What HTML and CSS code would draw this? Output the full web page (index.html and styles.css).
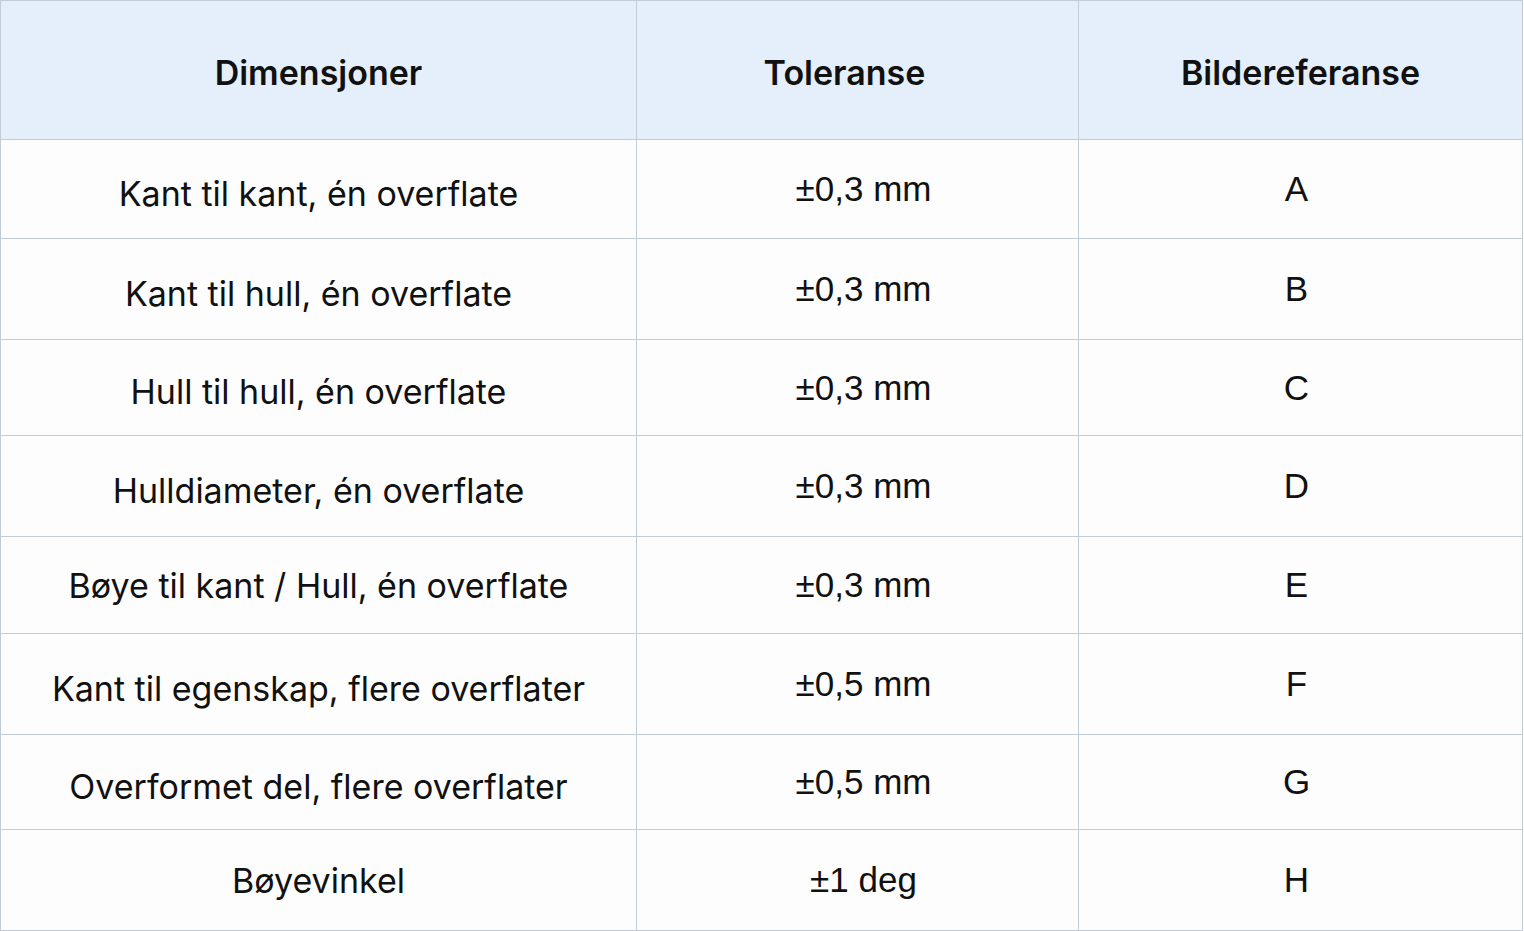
FILE: index.html
```html
<!DOCTYPE html>
<html lang="no">
<head>
<meta charset="utf-8">
<title>Toleranser</title>
<link rel="stylesheet" href="styles.css">
</head>
<body>
<div class="table">
  <div class="cell head">Dimensjoner</div>
  <div class="cell head head-tol">Toleranse</div>
  <div class="cell head">Bildereferanse</div>

  <div class="cell dim">Kant til kant, én overflate</div>
  <div class="cell tol">±0,3 mm</div>
  <div class="cell ref">A</div>

  <div class="cell dim">Kant til hull, én overflate</div>
  <div class="cell tol">±0,3 mm</div>
  <div class="cell ref">B</div>

  <div class="cell dim">Hull til hull, én overflate</div>
  <div class="cell tol">±0,3 mm</div>
  <div class="cell ref">C</div>

  <div class="cell dim">Hulldiameter, én overflate</div>
  <div class="cell tol">±0,3 mm</div>
  <div class="cell ref">D</div>

  <div class="cell dim dim-high">Bøye til kant / Hull, én overflate</div>
  <div class="cell tol">±0,3 mm</div>
  <div class="cell ref">E</div>

  <div class="cell dim">Kant til egenskap, flere overflater</div>
  <div class="cell tol">±0,5 mm</div>
  <div class="cell ref">F</div>

  <div class="cell dim">Overformet del, flere overflater</div>
  <div class="cell tol">±0,5 mm</div>
  <div class="cell ref">G</div>

  <div class="cell dim dim-high">Bøyevinkel</div>
  <div class="cell tol">±1 deg</div>
  <div class="cell ref">H</div>
</div>
</body>
</html>
```
FILE: styles.css
```css
html, body {
  margin: 0;
  padding: 0;
  background: #ffffff;
}

.table {
  width: 1523px;
  height: 931px;
  box-sizing: border-box;
  display: grid;
  grid-template-columns: 635px 441px 443px;
  grid-template-rows: 138px 98px 100px 95px 100px 96px 100px 94px 100px;
  gap: 1px;
  border: 1px solid #c3ccd6;
  background: #c3ccd6;
  color: #111111;
}

.cell {
  background: #fdfdfd;
  display: flex;
  align-items: center;
  justify-content: center;
  white-space: nowrap;
  box-sizing: border-box;
}

.head {
  background: #e4effb;
  font-family: Inter, "Noto Sans", sans-serif;
  font-weight: 600;
  font-size: 34px;
  padding-top: 4px;
}

.head-tol {
  padding-right: 26px;
}

.dim {
  font-family: Inter, "Noto Sans", sans-serif;
  font-size: 34px;
  padding-top: 8px;
}

.dim-high {
  padding-top: 0;
}

.tol, .ref {
  font-family: "Liberation Sans", Arial, sans-serif;
  font-size: 35px;
}

.tol {
  padding-left: 12px;
}

.ref {
  padding-right: 8px;
}
```
